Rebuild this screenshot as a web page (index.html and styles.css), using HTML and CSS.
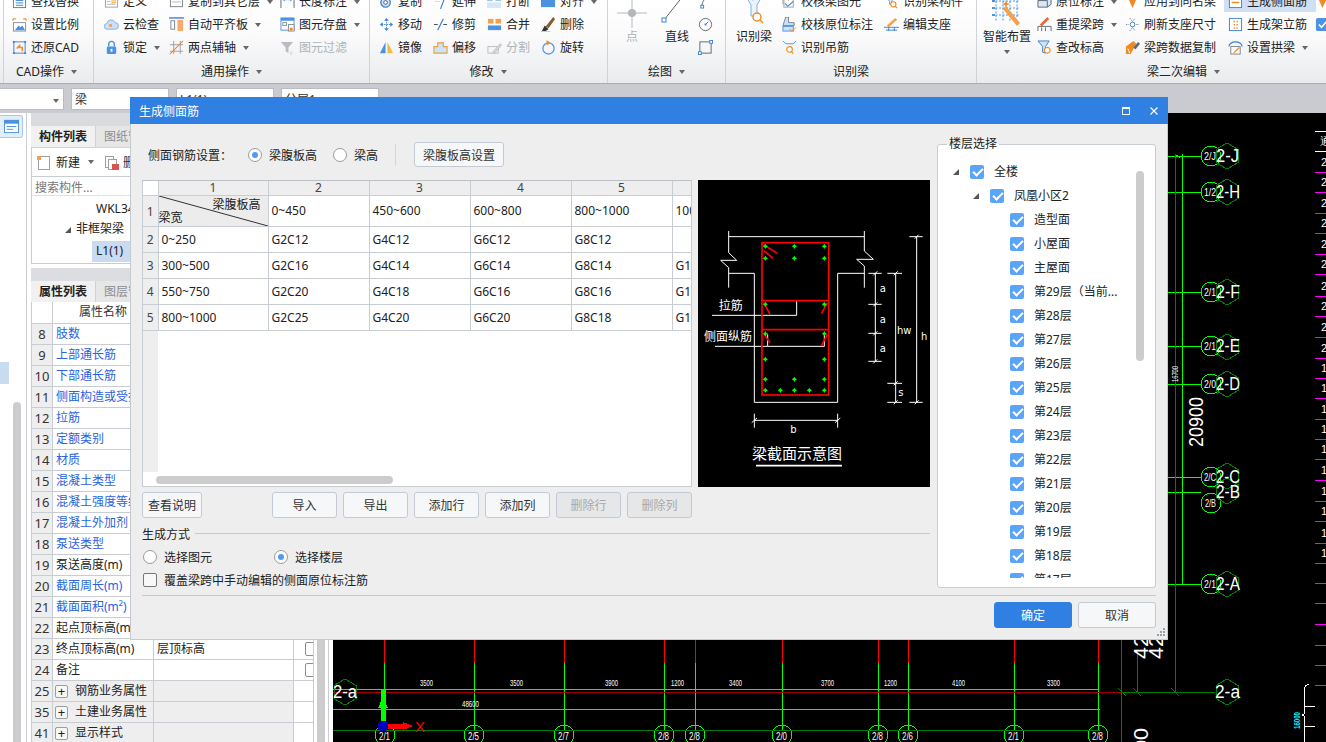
FILE: index.html
```html
<!DOCTYPE html>
<html lang="zh">
<head>
<meta charset="utf-8">
<title>生成侧面筋</title>
<link rel="stylesheet" href="styles.css">
</head>
<body>
<svg class="defs" aria-hidden="true">
  <symbol id="i-find" viewBox="0 0 16 16"><rect x="1.5" y="1.5" width="13" height="13" fill="#fff" stroke="#3b82d6"/><rect x="1" y="1" width="14" height="3" fill="#3b82d6"/><path d="M4 7h8M4 9.5h8M4 12h8" stroke="#3b82d6"/></symbol>
  <symbol id="i-scale" viewBox="0 0 16 16"><path d="M1 2h3M1 2v2M15 2h-3M15 2v2" stroke="#f08a24" stroke-width="1.2" fill="none"/><rect x="1.5" y="6" width="13" height="9" fill="#fff" stroke="#8a8f96"/><path d="M3 14l4-5 2 2 2-2 3 5z" fill="#4b93e0"/></symbol>
  <symbol id="i-restore" viewBox="0 0 16 16"><rect x="2" y="2" width="12" height="12" fill="none" stroke="#3b82d6"/><path d="M1 1h2v2H1zM13 1h2v2h-2zM1 13h2v2H1zM13 13h2v2h-2z" fill="#3b82d6"/><path d="M5 9l3-3v2h3v4" fill="none" stroke="#f08a24" stroke-width="1.6"/></symbol>
  <symbol id="i-def" viewBox="0 0 16 16"><rect x="1.5" y="3" width="13" height="11" fill="#fff" stroke="#9aa0a8"/><rect x="8" y="5" width="5" height="2" fill="#f5a04a"/><rect x="8" y="8" width="5" height="2" fill="#f5c04a"/><path d="M3 5h4M3 8h4M3 11h9" stroke="#b5b9c0"/></symbol>
  <symbol id="i-cloud" viewBox="0 0 16 16"><path d="M3.5 13a3 3 0 0 1-.4-6 4.5 4.5 0 0 1 8.700-1 3.500 3.500 0 0 1 .2 7z" fill="#cfe0f5" stroke="#7fb0e6"/><circle cx="7" cy="9" r="1.700" fill="#f5a04a"/></symbol>
  <symbol id="i-lock" viewBox="0 0 16 16"><path d="M5 7V4.500a3 3 0 0 1 6 0V7" fill="none" stroke="#4b93e0" stroke-width="1.500"/><rect x="3" y="7" width="10" height="8" rx="1.500" fill="#4b93e0"/><rect x="7" y="9.500" width="2" height="3" fill="#fff"/></symbol>
  <symbol id="i-copyto" viewBox="0 0 16 16"><rect x="1.500" y="2.500" width="13" height="11" fill="#fff" stroke="#7d838b"/><rect x="1" y="2" width="14" height="3" fill="#a4a9b0"/><rect x="3" y="8" width="10" height="1" fill="#b5b9c0"/></symbol>
  <symbol id="i-align" viewBox="0 0 16 16"><path d="M0 1h16" stroke="#3b82d6" stroke-width="1.500"/><rect x="2" y="4" width="4" height="9" fill="#fff" stroke="#7d838b"/><rect x="9" y="3" width="6" height="12" fill="#f7ac6b"/></symbol>
  <symbol id="i-two" viewBox="0 0 16 16"><path d="M5 1v14M12 1v14M1 5h14M1 12h14" stroke="#9aa0a8" fill="none"/><path d="M1 15L15 1" stroke="#f08a24" stroke-width="1.200"/></symbol>
  <symbol id="i-len" viewBox="0 0 16 16"><path d="M1 2v13M15 2v13M3 6h10" stroke="#5d6670" fill="none"/><path d="M3 6l2-2v4zM13 6l-2-2v4z" fill="#3b82d6"/></symbol>
  <symbol id="i-save" viewBox="0 0 16 16"><rect x="1" y="1" width="14" height="13" fill="#fff" stroke="#4b93e0"/><rect x="1" y="1" width="14" height="3" fill="#4b93e0"/><rect x="3" y="6" width="4" height="3" fill="none" stroke="#8a8f96"/><rect x="9" y="8" width="6" height="7" fill="#fff" stroke="#8a8f96"/><rect x="10.500" y="11.500" width="3" height="3" fill="#f08a24"/></symbol>
  <symbol id="i-filter" viewBox="0 0 16 16"><path d="M1 2h13L9 8v6L6 12V8z" fill="#b9bcc0"/><path d="M11 13h2M11 15h2" stroke="#c4c7ca"/></symbol>
  <symbol id="i-copy" viewBox="0 0 16 16"><circle cx="7" cy="9" r="5" fill="#cfe0f5" stroke="#3b82d6" stroke-width="1.400"/><circle cx="7" cy="9" r="2" fill="#fff" stroke="#557"/></symbol>
  <symbol id="i-move" viewBox="0 0 16 16"><path d="M8 1l2.500 3h-5zM8 15l2.500-3h-5zM1 8l3-2.500v5zM15 8l-3-2.500v5z" fill="#3b82d6"/><path d="M8 3v10M3 8h10" stroke="#3b82d6" stroke-dasharray="1.500 1"/></symbol>
  <symbol id="i-mirror" viewBox="0 0 16 16"><path d="M7 2L1 14h6z" fill="#4b93e0"/><path d="M9 2l6 12H9z" fill="#f5b942"/></symbol>
  <symbol id="i-extend" viewBox="0 0 16 16"><path d="M2 8h6" stroke="#c7cbd0" stroke-dasharray="2 1"/><path d="M14 0L8 16" stroke="#3b82d6" stroke-width="1.200"/></symbol>
  <symbol id="i-trim" viewBox="0 0 16 16"><path d="M1 8h4M11 8h4" stroke="#444"/><path d="M11 2L5 14" stroke="#3b82d6" stroke-width="1.200"/></symbol>
  <symbol id="i-offset" viewBox="0 0 16 16"><path d="M5 3h6v4h4v7H1V7h4z" fill="#cfe3f7" stroke="#f0a03c" stroke-width="1.200"/></symbol>
  <symbol id="i-break" viewBox="0 0 16 16"><rect x="0" y="0" width="6" height="7" fill="#4b93e0"/><rect x="9" y="0" width="6" height="7" fill="#4b93e0"/><rect x="0" y="9" width="15" height="6" fill="#d8e7f7"/></symbol>
  <symbol id="i-merge" viewBox="0 0 16 16"><rect x="1" y="2" width="6" height="5" fill="#f5a04a"/><rect x="9" y="2" width="6" height="5" fill="#f5a04a"/><rect x="1" y="9" width="14" height="5" fill="#4b93e0"/></symbol>
  <symbol id="i-split" viewBox="0 0 16 16"><rect x="1" y="7" width="11" height="7" fill="none" stroke="#b9bcc0"/><path d="M6 13l8-9 1.500 1.500-8 9z" fill="#d9dbde" stroke="#b9bcc0"/></symbol>
  <symbol id="i-alignr" viewBox="0 0 16 16"><rect x="0" y="1" width="15" height="13" fill="#4b93e0"/><rect x="0" y="0" width="15" height="2" fill="#8dbcec"/></symbol>
  <symbol id="i-del" viewBox="0 0 16 16"><path d="M5 10L13 0l2 2-7 10z" fill="#8a5a2b"/><path d="M4 9l4 4-3 2H1z" fill="#333"/><path d="M0 16h10" stroke="#c77" stroke-width="1"/></symbol>
  <symbol id="i-rot" viewBox="0 0 16 16"><circle cx="8" cy="9" r="6" fill="none" stroke="#4b93e0" stroke-width="1.300"/><path d="M6 0l4 3-4 3z" fill="#f08a24"/></symbol>
  <symbol id="i-arc" viewBox="0 0 16 16"><path d="M4 14C4 8 8 3 13 1" fill="none" stroke="#5d6670"/><rect x="3" y="12" width="3" height="3" fill="#fff" stroke="#3b82d6"/></symbol>
  <symbol id="i-circ" viewBox="0 0 16 16"><circle cx="8" cy="8" r="6.500" fill="#fff" stroke="#5d6670"/><path d="M8 8l3-3" stroke="#5d6670"/><rect x="7" y="7" width="2" height="2" fill="#3b82d6"/></symbol>
  <symbol id="i-rect" viewBox="0 0 16 16"><rect x="2" y="2" width="12" height="12" fill="none" stroke="#5d6670"/><rect x="0.500" y="12.500" width="3" height="3" fill="#fff" stroke="#3b82d6"/><rect x="12.500" y="0.500" width="3" height="3" fill="#fff" stroke="#3b82d6"/></symbol>
  <symbol id="i-check" viewBox="0 0 16 16"><path d="M1 1v10M3 1v10" stroke="#9aa0a8"/><rect x="2" y="1" width="10" height="13" fill="#fff" stroke="#9aa0a8"/><path d="M3 10l3 3 6-5" fill="none" stroke="#4b93e0" stroke-width="1.300"/><path d="M5 1l2 6 2-6" fill="none" stroke="#f08a24"/></symbol>
  <symbol id="i-check2" viewBox="0 0 16 16"><path d="M4 0h3v6h6v3H1z" fill="#cfe0f5" stroke="#5d6670" stroke-width=".8"/><rect x="1" y="10" width="11" height="5" fill="#cfe3f7" stroke="#4b93e0"/><path d="M8 13l3 2 4-4" fill="none" stroke="#f08a24"/></symbol>
  <symbol id="i-rec" viewBox="0 0 16 16"><path d="M2 2h10L8 8v4L6 11V8z" fill="#eaf2fb" stroke="#3b82d6" stroke-width=".8"/><circle cx="10" cy="11" r="2.800" fill="#fff" stroke="#f08a24" stroke-width="1.100"/><path d="M12 13l2 2" stroke="#f08a24" stroke-width="1.200"/></symbol>
  <symbol id="i-hang" viewBox="0 0 16 16"><path d="M1 1l3 3h8l3-3" fill="none" stroke="#4b93e0"/><circle cx="8" cy="10" r="3" fill="#fff" stroke="#f08a24" stroke-width="1.200"/><path d="M10 12l2 3" stroke="#f08a24" stroke-width="1.200"/></symbol>
  <symbol id="i-seat" viewBox="0 0 16 16"><path d="M3 9l9-8 2 2-9 8z" fill="#f5a04a"/><path d="M0 11h16M2 14h12M5 11v4M11 11v4" stroke="#3b82d6"/></symbol>
  <symbol id="i-orig" viewBox="0 0 16 16"><path d="M1 7l5-3h9v7l-4 3H1z" fill="#d8e7f7" stroke="#5d6670"/><path d="M1 7h10v7" fill="none" stroke="#5d6670"/></symbol>
  <symbol id="i-redo" viewBox="0 0 16 16"><path d="M3 8L11 0l2 2-8 8z" fill="#ea6a3a"/><path d="M1 10h14v5M1 10v5M5 11v4M9 11v4" fill="none" stroke="#5d6670"/></symbol>
  <symbol id="i-elev" viewBox="0 0 16 16"><path d="M1 1h12L9 7v7l-3-1V7z" fill="#cfe3f7" stroke="#3b82d6"/><circle cx="11" cy="11" r="3" fill="#fff" stroke="#f08a24" stroke-width="1.100"/></symbol>
  <symbol id="i-same" viewBox="0 0 16 16"><path d="M2 1h12v3H2z" fill="#f7d9a8"/><path d="M4 6h8l-4 9z" fill="#f08a24"/><path d="M1 1v5M15 1v5" stroke="#5d6670"/></symbol>
  <symbol id="i-size" viewBox="0 0 16 16"><circle cx="8" cy="8" r="2.500" fill="none" stroke="#3b82d6"/><path d="M5 1l3 4 3-4M5 15l3-4 3 4M1 8h3M12 8h3" fill="none" stroke="#7d838b" stroke-dasharray="1.500 1"/></symbol>
  <symbol id="i-data" viewBox="0 0 16 16"><path d="M1 15V7l8-6 3 3-6 11z" fill="#f08a24"/><path d="M9 8l5-6 2 2-5 6z" fill="#5d6670"/><path d="M3 9l2 5" stroke="#fff"/></symbol>
  <symbol id="i-side" viewBox="0 0 16 16"><rect x="1.500" y="1.500" width="13" height="13" fill="#fff" stroke="#3b82d6"/><path d="M4 9h8" stroke="#f08a24" stroke-width="1.500"/><path d="M4 5v1M12 5v1" stroke="#f08a24" stroke-width="1.500"/></symbol>
  <symbol id="i-erect" viewBox="0 0 16 16"><rect x="1.500" y="1.500" width="13" height="13" fill="#fff" stroke="#3b82d6"/><path d="M6 4h1.500v1.500H6zM9 4h1.500v1.500H9zM6 7.500h1.500V9H6zM9 7.500h1.500V9H9zM6 11h1.500v1.500H6zM9 11h1.500v1.500H9z" fill="#f08a24"/></symbol>
  <symbol id="i-arch" viewBox="0 0 16 16"><path d="M1 7a7 5 0 0 1 14 0" fill="none" stroke="#3b82d6" stroke-width="1.300"/><rect x="3" y="7" width="10" height="8" fill="#fff" stroke="#7d838b"/><path d="M6 14l6-6" stroke="#f08a24" stroke-width="1.300"/></symbol>
  <symbol id="i-tick" viewBox="0 0 16 16"><rect x="1" y="1" width="14" height="14" rx="2" fill="#4b93e0"/><path d="M4 8l3 3 5-6" fill="none" stroke="#fff" stroke-width="1.600"/></symbol>
  <symbol id="hex" viewBox="-12 -14 24 28" overflow="visible"><polygon points="0,-13 11,-6.500 11,6.500 0,13 -11,6.500 -11,-6.500" fill="none" stroke="#007f00"/></symbol>
</svg>

<div class="app">
  <header class="ribbon">
    <section class="group g-cad">
      <div class="gbody">
        <div class="col">
          <div class="it"><svg class="ic"><use href="#i-find"/></svg><span>查找替换</span></div>
          <div class="it"><svg class="ic"><use href="#i-scale"/></svg><span>设置比例</span></div>
          <div class="it"><svg class="ic"><use href="#i-restore"/></svg><span>还原CAD</span></div>
        </div>
      </div>
      <div class="glabel gl-cad">CAD操作<i class="caret"></i></div>
    </section>
    <section class="group g-gen">
      <div class="gbody">
        <div class="col c65">
          <div class="it"><svg class="ic"><use href="#i-def"/></svg><span>定义</span></div>
          <div class="it"><svg class="ic"><use href="#i-cloud"/></svg><span>云检查</span></div>
          <div class="it"><svg class="ic"><use href="#i-lock"/></svg><span>锁定</span><i class="caret"></i></div>
        </div>
        <div class="col c111">
          <div class="it"><svg class="ic"><use href="#i-copyto"/></svg><span>复制到其它层</span><i class="caret"></i></div>
          <div class="it"><svg class="ic"><use href="#i-align"/></svg><span>自动平齐板</span><i class="caret"></i></div>
          <div class="it"><svg class="ic"><use href="#i-two"/></svg><span>两点辅轴</span><i class="caret"></i></div>
        </div>
        <div class="col">
          <div class="it"><svg class="ic"><use href="#i-len"/></svg><span>长度标注</span><i class="caret"></i></div>
          <div class="it"><svg class="ic"><use href="#i-save"/></svg><span>图元存盘</span><i class="caret"></i></div>
          <div class="it off"><svg class="ic"><use href="#i-filter"/></svg><span>图元过滤</span></div>
        </div>
      </div>
      <div class="glabel">通用操作<i class="caret"></i></div>
    </section>
    <section class="group g-mod">
      <div class="gbody">
        <div class="col c54">
          <div class="it"><svg class="ic"><use href="#i-copy"/></svg><span>复制</span></div>
          <div class="it"><svg class="ic"><use href="#i-move"/></svg><span>移动</span></div>
          <div class="it"><svg class="ic"><use href="#i-mirror"/></svg><span>镜像</span></div>
        </div>
        <div class="col c54">
          <div class="it"><svg class="ic"><use href="#i-extend"/></svg><span>延伸</span></div>
          <div class="it"><svg class="ic"><use href="#i-trim"/></svg><span>修剪</span></div>
          <div class="it"><svg class="ic"><use href="#i-offset"/></svg><span>偏移</span></div>
        </div>
        <div class="col c54">
          <div class="it"><svg class="ic"><use href="#i-break"/></svg><span>打断</span></div>
          <div class="it"><svg class="ic"><use href="#i-merge"/></svg><span>合并</span></div>
          <div class="it off"><svg class="ic"><use href="#i-split"/></svg><span>分割</span></div>
        </div>
        <div class="col">
          <div class="it"><svg class="ic"><use href="#i-alignr"/></svg><span>对齐</span><i class="caret"></i></div>
          <div class="it"><svg class="ic"><use href="#i-del"/></svg><span>删除</span></div>
          <div class="it"><svg class="ic"><use href="#i-rot"/></svg><span>旋转</span></div>
        </div>
      </div>
      <div class="glabel">修改<i class="caret"></i></div>
    </section>
    <section class="group g-draw">
      <div class="gbody">
        <div class="lg w48 off">
          <svg class="lgic" viewBox="0 0 40 38"><path d="M5 22h30M20 5v32" stroke="#b4b8bd"/><circle cx="20" cy="22" r="4" fill="#b4b8bd"/></svg>
          <span>点</span>
        </div>
        <div class="lg w40">
          <svg class="lgic" viewBox="0 0 40 38"><path d="M7 29L30 0" stroke="#5d6670"/><rect x="5" y="27" width="4" height="4" fill="#fff" stroke="#3b82d6"/></svg>
          <span>直线</span>
        </div>
        <div class="col">
          <div class="it"><svg class="ic"><use href="#i-arc"/></svg></div>
          <div class="it"><svg class="ic"><use href="#i-circ"/></svg></div>
          <div class="it"><svg class="ic"><use href="#i-rect"/></svg></div>
        </div>
      </div>
      <div class="glabel">绘图<i class="caret"></i></div>
    </section>
    <section class="group g-rec">
      <div class="gbody">
        <div class="lg w54">
          <svg class="lgic" viewBox="0 0 40 38"><path d="M9 0l8 14v11h6V14l8-14" fill="#eaf2fb" stroke="#7fb0e6"/><path d="M13 2l6 8M18 0l5 8M24 0l2 4" stroke="#b5cfee"/><circle cx="23" cy="26" r="4" fill="#fff" stroke="#f08a24" stroke-width="1.400"/><path d="M26 29l3 3" stroke="#f08a24" stroke-width="1.400"/></svg>
          <span>识别梁</span>
        </div>
        <div class="col c102">
          <div class="it"><svg class="ic"><use href="#i-check"/></svg><span>校核梁图元</span></div>
          <div class="it"><svg class="ic"><use href="#i-check2"/></svg><span>校核原位标注</span></div>
          <div class="it"><svg class="ic"><use href="#i-hang"/></svg><span>识别吊筋</span></div>
        </div>
        <div class="col">
          <div class="it"><svg class="ic"><use href="#i-rec"/></svg><span>识别梁构件</span></div>
          <div class="it"><svg class="ic"><use href="#i-seat"/></svg><span>编辑支座</span></div>
        </div>
      </div>
      <div class="glabel">识别梁</div>
    </section>
    <section class="group g-beam">
      <div class="gbody">
        <div class="lg w58">
          <svg class="lgic" viewBox="0 0 40 38"><path d="M9 3v28M16 3v28M23 3v28M30 3v24M5 10h28M5 17h28M5 24h28" stroke="#4b93e0" stroke-dasharray="2 1.500"/><path d="M5 10h3M5 17h3M5 24h3" stroke="#4b93e0" stroke-width="2"/><path d="M19 15l14 17-3 3-14-17z" fill="#f5a04a"/><path d="M19 9l1 3 3 1-3 1-1 3-1-3-3-1 3-1z" fill="#f08a24"/></svg>
          <span>智能布置</span>
          <i class="caret lgcaret"></i>
        </div>
        <div class="col c88">
          <div class="it"><svg class="ic"><use href="#i-orig"/></svg><span>原位标注</span><i class="caret"></i></div>
          <div class="it"><svg class="ic"><use href="#i-redo"/></svg><span>重提梁跨</span><i class="caret"></i></div>
          <div class="it"><svg class="ic"><use href="#i-elev"/></svg><span>查改标高</span></div>
        </div>
        <div class="col c103">
          <div class="it"><svg class="ic"><use href="#i-same"/></svg><span>应用到同名梁</span></div>
          <div class="it"><svg class="ic"><use href="#i-size"/></svg><span>刷新支座尺寸</span></div>
          <div class="it"><svg class="ic"><use href="#i-data"/></svg><span>梁跨数据复制</span></div>
        </div>
        <div class="col c87">
          <div class="it sel"><svg class="ic"><use href="#i-side"/></svg><span>生成侧面筋</span></div>
          <div class="it"><svg class="ic"><use href="#i-erect"/></svg><span>生成架立筋</span></div>
          <div class="it"><svg class="ic"><use href="#i-arch"/></svg><span>设置拱梁</span><i class="caret"></i></div>
        </div>
        <div class="col">
          <div class="it"><svg class="ic"><use href="#i-same"/></svg></div>
          <div class="it"><svg class="ic"><use href="#i-tick"/></svg></div>
        </div>
      </div>
      <div class="glabel gl-beam">梁二次编辑<i class="caret"></i></div>
    </section>
  </header>

  <div class="selbar">
    <div class="selbox s1"><i class="caret"></i></div>
    <div class="selbox">梁</div>
    <div class="selbox">L1(1)</div>
    <div class="selbox">分层1</div>
  </div>

  <main class="work">
    <nav class="rail">
      <div class="railtab"><svg class="railic" viewBox="0 0 16 16"><rect x=".5" y="1.500" width="15" height="13" fill="#fff" stroke="#4b93e0"/><rect x="0" y="1" width="16" height="4" fill="#4b93e0"/><path d="M3 8h10M3 11h7" stroke="#4b93e0"/></svg></div>
      <div class="railsel"></div>
      <div class="railbar"></div>
    </nav>
    <div class="panel">
      <div class="ptop"></div>
      <div class="tabs">
        <div class="tab on">构件列表</div>
        <div class="tab">图纸管理</div>
      </div>
      <div class="ptool">
        <svg class="ic"><rect x="2.500" y="1.500" width="11" height="13" fill="#fff" stroke="#9aa0a8"/><path d="M1 1h4v4H1z" fill="#f5a04a"/></svg>
        <span class="ptxt">新建</span><i class="caret"></i>
        <svg class="ic pdel"><rect x="1.500" y="1.500" width="8" height="11" fill="#fff" stroke="#9aa0a8"/><rect x="4.500" y="4.500" width="8" height="10" fill="#fff" stroke="#9aa0a8"/><rect x="8" y="9" width="7" height="7" fill="#d9534f"/></svg>
        <span>删除</span>
      </div>
      <div class="psearch">搜索构件...</div>
      <div class="ptree">
        <div class="tr t1">WKL34</div>
        <div class="tr t2"><i class="arrow"></i>非框架梁</div>
        <div class="tr t3"><span class="picked">L1(1)</span></div>
      </div>
      <div class="pgap"></div>
      <div class="tabs">
        <div class="tab on">属性列表</div>
        <div class="tab">图层管理</div>
      </div>
      <div class="props">
        <div class="prow phead"><div></div><div class="pc">属性名称</div><div class="pv pc">属性值</div><div></div></div>
        <div class="prow"><div class="pn">8</div><div class="pname link">肢数</div><div class="pv"></div><div></div></div>
        <div class="prow"><div class="pn">9</div><div class="pname link">上部通长筋</div><div class="pv"></div><div></div></div>
        <div class="prow"><div class="pn">10</div><div class="pname link">下部通长筋</div><div class="pv"></div><div></div></div>
        <div class="prow"><div class="pn">11</div><div class="pname link">侧面构造或受扭筋</div><div class="pv"></div><div></div></div>
        <div class="prow"><div class="pn">12</div><div class="pname link">拉筋</div><div class="pv"></div><div></div></div>
        <div class="prow"><div class="pn">13</div><div class="pname link">定额类别</div><div class="pv"></div><div></div></div>
        <div class="prow"><div class="pn">14</div><div class="pname link">材质</div><div class="pv"></div><div></div></div>
        <div class="prow"><div class="pn">15</div><div class="pname link">混凝土类型</div><div class="pv"></div><div></div></div>
        <div class="prow"><div class="pn">16</div><div class="pname link">混凝土强度等级</div><div class="pv"></div><div></div></div>
        <div class="prow"><div class="pn">17</div><div class="pname link">混凝土外加剂</div><div class="pv"></div><div></div></div>
        <div class="prow"><div class="pn">18</div><div class="pname link">泵送类型</div><div class="pv"></div><div></div></div>
        <div class="prow"><div class="pn">19</div><div class="pname">泵送高度(m)</div><div class="pv"></div><div></div></div>
        <div class="prow"><div class="pn">20</div><div class="pname link">截面周长(m)</div><div class="pv"></div><div></div></div>
        <div class="prow"><div class="pn">21</div><div class="pname link">截面面积(m²)</div><div class="pv"></div><div></div></div>
        <div class="prow"><div class="pn">22</div><div class="pname">起点顶标高(m)</div><div class="pv"></div><div></div></div>
        <div class="prow"><div class="pn">23</div><div class="pname">终点顶标高(m)</div><div class="pv">层顶标高</div><div class="pk"><span class="minick"></span></div></div>
        <div class="prow"><div class="pn">24</div><div class="pname">备注</div><div class="pv"></div><div class="pk"><span class="minick"></span></div></div>
        <div class="prow pgroup"><div class="pn">25</div><div class="pname"><span class="plus">+</span>钢筋业务属性</div><div class="pv"></div><div></div></div>
        <div class="prow pgroup"><div class="pn">35</div><div class="pname"><span class="plus">+</span>土建业务属性</div><div class="pv"></div><div></div></div>
        <div class="prow pgroup"><div class="pn">41</div><div class="pname"><span class="plus">+</span>显示样式</div><div class="pv"></div><div></div></div>
      </div>
    </div>
    <div class="pscroll"><div class="pthumb"></div></div>

    <div class="canvas">
      <svg class="cad" viewBox="333 113 993 629" width="993" height="629">
        <g class="bright">
          <path d="M1168 156h33M1168 192h33M1168 292h33M1168 346h33M1168 384h33M1168 477h33M1168 492h33M1168 584h33"/>
          <path d="M1182 154v430M1175 154l5 4"/>
          <path d="M333 689H1098M333 709H1100"/>
          <path d="M384 663v67M474 663v67M564 663v67M664 663v67M695 663v67M782 663v67M878 663v67M908 663v67M1014 663v67M1098 663v67"/>
          <circle cx="1211" cy="156" r="10"/><circle cx="1211" cy="192" r="10"/><circle cx="1211" cy="292" r="10"/><circle cx="1211" cy="346" r="10"/><circle cx="1211" cy="384" r="10"/><circle cx="1211" cy="477" r="10"/><circle cx="1211" cy="503" r="10"/><circle cx="1211" cy="584" r="10"/>
          <circle cx="385" cy="735" r="10"/><circle cx="474" cy="735" r="10"/><circle cx="564" cy="735" r="10"/><circle cx="664" cy="735" r="10"/><circle cx="695" cy="735" r="10"/><circle cx="782" cy="735" r="10"/><circle cx="878" cy="735" r="10"/><circle cx="908" cy="735" r="10"/><circle cx="1014" cy="735" r="10"/><circle cx="1098" cy="735" r="10"/>
        </g>
        <g class="dark">
          <path d="M1175 154V692M1121 640V742M1137 650V692M1120 692H1215M333 730H1100"/>
          <path d="M1118 688l8 8M1133 688l8 8M1171 688l8 8"/>
          <use href="#hex" x="1215" y="142" width="24" height="28"/><use href="#hex" x="1215" y="178" width="24" height="28"/><use href="#hex" x="1215" y="278" width="24" height="28"/><use href="#hex" x="1215" y="333" width="24" height="28"/><use href="#hex" x="1215" y="370" width="24" height="28"/><use href="#hex" x="1215" y="462" width="24" height="28"/><use href="#hex" x="1215" y="477" width="24" height="28"/><use href="#hex" x="1215" y="570" width="24" height="28"/><use href="#hex" x="1215" y="678" width="24" height="28"/><use href="#hex" x="333" y="678" width="24" height="28"/>
        </g>
        <g class="redline">
          <path d="M384 640v23M474 640v23M564 640v23M664 640v23M695 640v23M782 640v23M878 640v23M908 640v23M1014 640v23M1098 640v23"/>
        </g>
        <path class="dred" d="M333 692H1121"/>
        <g class="magenta">
          <path d="M1315 172h11M1315 192h11M1315 213h11M1315 233h11M1315 254h11M1315 274h11M1315 296h11M1315 316h11M1315 337h11M1315 358h11M1315 378h11M1315 398h11M1315 419h11M1315 439h11M1315 459h11M1315 480h11M1315 501h11M1315 521h11M1315 543h11M1315 563h11M1315 583h11M1315 603h11M1315 624h11M1315 645h11M1315 665h11M1315 685h11"/>
        </g>
        <path class="wline" d="M1315 131h11M1315 151h11M1309 684c-3 1-5 3-5 6v24l-2 1 2 1v26M1304 706h11M1304 726h11"/>
        <g class="ctext">
          <text x="1204" y="160" class="t11" textLength="12" lengthAdjust="spacingAndGlyphs">2/J</text>
          <text x="1216" y="162" class="t18" textLength="23" lengthAdjust="spacingAndGlyphs">2-J</text>
          <text x="1204" y="196" class="t11" textLength="12" lengthAdjust="spacingAndGlyphs">1/2</text>
          <text x="1216" y="198" class="t18" textLength="24" lengthAdjust="spacingAndGlyphs">2-H</text>
          <text x="1204" y="296" class="t11" textLength="12" lengthAdjust="spacingAndGlyphs">2/1</text>
          <text x="1216" y="298" class="t18" textLength="24" lengthAdjust="spacingAndGlyphs">2-F</text>
          <text x="1204" y="350" class="t11" textLength="12" lengthAdjust="spacingAndGlyphs">2/1</text>
          <text x="1216" y="352" class="t18" textLength="24" lengthAdjust="spacingAndGlyphs">2-E</text>
          <text x="1204" y="388" class="t11" textLength="12" lengthAdjust="spacingAndGlyphs">2/0</text>
          <text x="1216" y="390" class="t18" textLength="24" lengthAdjust="spacingAndGlyphs">2-D</text>
          <text x="1204" y="481" class="t11" textLength="12" lengthAdjust="spacingAndGlyphs">2/C</text>
          <text x="1216" y="483" class="t18" textLength="24" lengthAdjust="spacingAndGlyphs">2-C</text>
          <text x="1216" y="498" class="t18" textLength="24" lengthAdjust="spacingAndGlyphs">2-B</text>
          <text x="1205" y="507" class="t11" textLength="11" lengthAdjust="spacingAndGlyphs">2/B</text>
          <text x="1204" y="588" class="t11" textLength="12" lengthAdjust="spacingAndGlyphs">2/1</text>
          <text x="1216" y="590" class="t18" textLength="24" lengthAdjust="spacingAndGlyphs">2-A</text>
          <text x="1215" y="698" class="t18" textLength="25" lengthAdjust="spacingAndGlyphs">2-a</text>
          <text x="333" y="698" class="t18" textLength="24" lengthAdjust="spacingAndGlyphs">2-a</text>
          <text x="420" y="686" class="t9" textLength="13" lengthAdjust="spacingAndGlyphs">3500</text>
          <text x="510" y="686" class="t9" textLength="13" lengthAdjust="spacingAndGlyphs">3500</text>
          <text x="605" y="686" class="t9" textLength="13" lengthAdjust="spacingAndGlyphs">3900</text>
          <text x="671" y="686" class="t9" textLength="13" lengthAdjust="spacingAndGlyphs">1200</text>
          <text x="729" y="686" class="t9" textLength="13" lengthAdjust="spacingAndGlyphs">3400</text>
          <text x="821" y="686" class="t9" textLength="13" lengthAdjust="spacingAndGlyphs">3700</text>
          <text x="884" y="686" class="t9" textLength="13" lengthAdjust="spacingAndGlyphs">1200</text>
          <text x="952" y="686" class="t9" textLength="13" lengthAdjust="spacingAndGlyphs">4100</text>
          <text x="1047" y="686" class="t9" textLength="13" lengthAdjust="spacingAndGlyphs">3300</text>
          <text x="462" y="707" class="t9" textLength="17" lengthAdjust="spacingAndGlyphs">48600</text>
          <text x="379" y="740" class="t11" textLength="11" lengthAdjust="spacingAndGlyphs">2/1</text>
          <text x="468" y="740" class="t11" textLength="11" lengthAdjust="spacingAndGlyphs">2/5</text>
          <text x="558" y="740" class="t11" textLength="11" lengthAdjust="spacingAndGlyphs">2/7</text>
          <text x="658" y="740" class="t11" textLength="11" lengthAdjust="spacingAndGlyphs">2/8</text>
          <text x="689" y="740" class="t11" textLength="11" lengthAdjust="spacingAndGlyphs">2/8</text>
          <text x="776" y="740" class="t11" textLength="11" lengthAdjust="spacingAndGlyphs">2/0</text>
          <text x="872" y="740" class="t11" textLength="11" lengthAdjust="spacingAndGlyphs">2/8</text>
          <text x="902" y="740" class="t11" textLength="11" lengthAdjust="spacingAndGlyphs">2/6</text>
          <text x="1008" y="740" class="t11" textLength="11" lengthAdjust="spacingAndGlyphs">2/1</text>
          <text x="1092" y="740" class="t11" textLength="11" lengthAdjust="spacingAndGlyphs">2/8</text>
          <text class="t20" transform="translate(1203 447) rotate(-90)" textLength="50" lengthAdjust="spacingAndGlyphs">20900</text>
          <text class="t9" transform="translate(1178 382) rotate(-90)" textLength="16" lengthAdjust="spacingAndGlyphs">16700</text>
          <text class="t20" transform="translate(1148 659) rotate(-90)" textLength="24" lengthAdjust="spacingAndGlyphs">42</text>
          <text class="t20" transform="translate(1163 659) rotate(-90)" textLength="24" lengthAdjust="spacingAndGlyphs">42</text>
          <text class="t20" transform="translate(1148 752) rotate(-90)" textLength="24" lengthAdjust="spacingAndGlyphs">00</text>
          <text x="1320" y="145" class="t11">通</text>
          <text x="1321" y="166" class="t11">2</text><text x="1321" y="186" class="t11">2</text><text x="1321" y="207" class="t11">2</text><text x="1321" y="227" class="t11">2</text><text x="1321" y="248" class="t11">2</text><text x="1321" y="268" class="t11">2</text><text x="1321" y="290" class="t11">2</text><text x="1321" y="310" class="t11">2</text><text x="1321" y="331" class="t11">2</text><text x="1321" y="352" class="t11">2</text>
          <text x="1321" y="372" class="t11">1</text><text x="1321" y="392" class="t11">1</text><text x="1321" y="413" class="t11">1</text><text x="1321" y="433" class="t11">1</text><text x="1321" y="453" class="t11">1</text><text x="1321" y="474" class="t11">1</text><text x="1321" y="495" class="t11">1</text><text x="1321" y="515" class="t11">1</text><text x="1321" y="537" class="t11">1</text><text x="1321" y="557" class="t11">1</text>
        </g>
        <text class="cyan" transform="translate(1300 729) rotate(-90)" textLength="17" lengthAdjust="spacingAndGlyphs">16000</text>
        <path class="axisg" d="M383 721V690"/>
        <path class="axisgh" d="M383 697l5 11h-10z"/>
        <path class="axisr" d="M388 726h18"/>
        <path class="axisrh" d="M413 726l-10-4v8z"/>
        <circle class="axisb" cx="383" cy="726" r="5.500"/>
        <text class="axisx" x="415" y="732">X</text>
      </svg>
    </div>
  </main>

  <div class="dialog">
    <div class="dtitle">
      <span>生成侧面筋</span>
      <span class="dbtns">
        <svg class="dbtn" viewBox="0 0 10 10"><rect x="1.500" y="1.500" width="7" height="7" fill="none" stroke="#fff"/><path d="M1 2h8" stroke="#fff" stroke-width="2"/></svg>
        <svg class="dbtn" viewBox="0 0 10 10"><path d="M1.500 1.500l7 7M8.500 1.500l-7 7" stroke="#fff" stroke-width="1.200"/></svg>
      </span>
    </div>
    <div class="dbody">
      <div class="dmain">
        <div class="dleft">
          <div class="setrow">
            <span class="setlabel">侧面钢筋设置：</span>
            <label class="rad r1"><i class="radio on"></i>梁腹板高</label>
            <label class="rad r2"><i class="radio"></i>梁高</label>
            <i class="vsep"></i>
            <button class="btn bset">梁腹板高设置</button>
          </div>
          <div class="gridrow">
            <div class="gridwrap">
              <table class="grid">
                <colgroup><col class="c0"><col class="c1"><col class="cn"><col class="cn"><col class="cn"><col class="cn"><col class="cn"></colgroup>
                <tr class="hr"><th class="blank"></th><th>1</th><th>2</th><th>3</th><th>4</th><th>5</th><th></th></tr>
                <tr class="r0"><th>1</th>
                  <td class="corner">
                    <svg class="diag" viewBox="0 0 100 100" preserveAspectRatio="none"><path d="M0 0L100 100" stroke="#333" vector-effect="non-scaling-stroke"/></svg>
                    <span class="ctop">梁腹板高</span><span class="cbot">梁宽</span>
                  </td>
                  <td>0~450</td><td>450~600</td><td>600~800</td><td>800~1000</td><td>1000~1200</td></tr>
                <tr><th>2</th><td>0~250</td><td>G2C12</td><td>G4C12</td><td>G6C12</td><td>G8C12</td><td></td></tr>
                <tr><th>3</th><td>300~500</td><td>G2C16</td><td>G4C14</td><td>G6C14</td><td>G8C14</td><td>G10C14</td></tr>
                <tr><th>4</th><td>550~750</td><td>G2C20</td><td>G4C18</td><td>G6C16</td><td>G8C16</td><td>G10C16</td></tr>
                <tr><th>5</th><td>800~1000</td><td>G2C25</td><td>G4C20</td><td>G6C20</td><td>G8C18</td><td>G10C18</td></tr>
              </table>
              <div class="hthumb"></div>
            </div>
            <div class="section">
              <svg class="secsvg" viewBox="24 27 696 921" width="232" height="307">
                <g class="w">
                  <path d="M116 180V245L140 268H92L116 290V350M116 197H523M523 180V240L550 265H500L523 285V350"/>
                  <path d="M116 307H193V694H443V307H523"/>
                  <path d="M320 390V433H66M233 490V526H75M403 490V526H233"/>
                  <path d="M556 307V571M535 307H575M535 400H575M535 487H575M535 571H575"/>
                  <path d="M617 307V694M592 307H636M592 637H636M592 694H636"/>
                  <path d="M680 197V694M658 197H698M658 694H698"/>
                  <path d="M193 748H443M193 728V770M443 728V770"/>
                  <path d="M185 755l16-14M435 755l16-14M550 313l12-12M550 406l12-12M550 493l12-12M550 577l12-12M611 313l12-12M611 643l12-12M611 700l12-12M674 203l12-12M674 700l12-12"/>
                </g>
                <g class="red">
                  <rect x="216" y="215" width="200" height="457"/>
                  <path d="M216 389H416M216 476H416"/>
                  <path d="M222 222l40 25M222 240l28 22M222 396l18 34M412 396l-18 32M222 490l18 25M412 490l-18 35"/>
                </g>
                <g class="dots">
                  <use href="#dot" x="226" y="226"/><use href="#dot" x="313" y="226"/><use href="#dot" x="403" y="226"/><use href="#dot" x="226" y="262"/><use href="#dot" x="313" y="262"/><use href="#dot" x="403" y="262"/><use href="#dot" x="226" y="400"/><use href="#dot" x="403" y="400"/><use href="#dot" x="226" y="488"/><use href="#dot" x="403" y="488"/><use href="#dot" x="226" y="565"/><use href="#dot" x="403" y="565"/><use href="#dot" x="226" y="625"/><use href="#dot" x="313" y="625"/><use href="#dot" x="403" y="625"/><use href="#dot" x="226" y="658"/><use href="#dot" x="271" y="658"/><use href="#dot" x="313" y="658"/><use href="#dot" x="358" y="658"/><use href="#dot" x="403" y="658"/>
                </g>
                <defs><path id="dot" d="M0-8L3-3 8 0 3 3 0 8-3 3-8 0-3-3z" fill="#0f0"/></defs>
                <g class="lab">
                  <text x="86" y="416" class="cjk36">拉筋</text>
                  <text x="42" y="510" class="cjk36">侧面纵筋</text>
                  <text x="569" y="362">a</text><text x="569" y="455">a</text><text x="569" y="542">a</text>
                  <text x="621" y="490">hw</text>
                  <text x="625" y="675">s</text>
                  <text x="693" y="506">h</text>
                  <text x="301" y="787">b</text>
                  <text x="186" y="864" class="cjk45">梁截面示意图</text>
                </g>
                <path class="wu" d="M198 884H456"/>
              </svg>
            </div>
          </div>
          <div class="btnrow">
            <button class="btn b60">查看说明</button>
            <span class="bspace"></span>
            <button class="btn b65">导入</button>
            <button class="btn b65">导出</button>
            <button class="btn b65">添加行</button>
            <button class="btn b65">添加列</button>
            <button class="btn b65 dis">删除行</button>
            <button class="btn b65 dis">删除列</button>
          </div>
          <div class="legend"><span>生成方式</span><i></i></div>
          <div class="genrow">
            <label class="rad g1"><i class="radio"></i>选择图元</label>
            <label class="rad"><i class="radio on"></i>选择楼层</label>
          </div>
          <label class="rad cover"><i class="box"></i>覆盖梁跨中手动编辑的侧面原位标注筋</label>
        </div>
        <div class="floors">
          <div class="flegend">楼层选择</div>
          <div class="flist">
            <div class="fr l0"><i class="arrow"></i><i class="ck"></i><span>全楼</span></div>
            <div class="fr l1"><i class="arrow"></i><i class="ck"></i><span>凤凰小区2</span></div>
            <div class="fr l2"><i class="ck"></i><span>造型面</span></div>
            <div class="fr l2"><i class="ck"></i><span>小屋面</span></div>
            <div class="fr l2"><i class="ck"></i><span>主屋面</span></div>
            <div class="fr l2"><i class="ck"></i><span>第29层（当前...</span></div>
            <div class="fr l2"><i class="ck"></i><span>第28层</span></div>
            <div class="fr l2"><i class="ck"></i><span>第27层</span></div>
            <div class="fr l2"><i class="ck"></i><span>第26层</span></div>
            <div class="fr l2"><i class="ck"></i><span>第25层</span></div>
            <div class="fr l2"><i class="ck"></i><span>第24层</span></div>
            <div class="fr l2"><i class="ck"></i><span>第23层</span></div>
            <div class="fr l2"><i class="ck"></i><span>第22层</span></div>
            <div class="fr l2"><i class="ck"></i><span>第21层</span></div>
            <div class="fr l2"><i class="ck"></i><span>第20层</span></div>
            <div class="fr l2"><i class="ck"></i><span>第19层</span></div>
            <div class="fr l2"><i class="ck"></i><span>第18层</span></div>
            <div class="fr l2"><i class="ck"></i><span>第17层</span></div>
          </div>
          <div class="vthumb"></div>
        </div>
      </div>
      <div class="dhr"></div>
      <div class="dfoot">
        <button class="btn bok">确定</button>
        <button class="btn bcancel">取消</button>
      </div>
    </div>
    <svg class="grip" viewBox="0 0 8 8"><path d="M6 0h2v2H6zM3 3h2v2H3zM6 3h2v2H6zM0 6h2v2H0zM3 6h2v2H3zM6 6h2v2H6z" fill="#9aa0a8"/></svg>
  </div>
</div>
</body>
</html>
```

FILE: styles.css
```css
* { box-sizing: border-box; }
html, body { margin: 0; padding: 0; }
body {
  width: 1326px;
  height: 742px;
  overflow: hidden;
  font-family: "Noto Sans", "Noto Sans CJK SC", sans-serif;
  font-size: 12px;
  color: #333;
  background: #c9cbd0;
}
.defs { display: none; }
.app { position: relative; width: 1326px; height: 742px; overflow: hidden; display: flex; flex-direction: column; }

/* ribbon */
.ribbon {
  height: 84px;
  flex: none;
  display: flex;
  overflow: hidden;
  background: linear-gradient(#fff 0, #fbfbfc 40%, #e9ebed 100%);
  border-bottom: 1px solid #a9acb2;
}
.group { flex: none; height: 83px; display: flex; flex-direction: column; border-right: 1px solid #cfd2d6; }
.g-cad { width: 91px; margin-left: 3px; border-left: 1px solid #cfd2d6; padding-left: 8px; }
.g-gen { width: 276px; padding-left: 10px; }
.g-mod { width: 238px; padding-left: 9px; }
.g-draw { width: 118px; }
.g-rec { width: 251px; }
.g-beam { width: 349px; border-right: 0; }
.gbody { display: flex; height: 69px; margin-top: -9px; flex: none; }
.col { display: flex; flex-direction: column; flex: none; }
.c54 { width: 54px; }
.c65 { width: 65px; }
.c87 { width: 87px; }
.c88 { width: 88px; }
.c102 { width: 102px; }
.c103 { width: 103px; }
.c111 { width: 111px; }
.it { display: flex; align-items: center; height: 21px; margin-bottom: 2px; white-space: nowrap; line-height: 21px; color: #222; }
.it.off, .lg.off { color: #b0b3b7; }
.it.sel { background: #cfe0f5; margin-left: -4px; padding-left: 4px; margin-right: -1px; }
.ic { width: 15px; height: 15px; flex: none; margin-right: 4px; }
.caret { display: inline-block; width: 0; height: 0; border: 3.5px solid transparent; border-top: 4px solid #666; border-bottom: 0; margin-left: 7px; flex: none; }
.glabel { height: 23px; line-height: 23px; text-align: center; color: #222; flex: none; }
.g-gen .glabel, .g-mod .glabel { margin-right: 10px; }
.gl-cad { margin-right: 12px; }
.gl-beam { padding-left: 64px; }
.glabel .caret { vertical-align: middle; margin-bottom: 2px; }
.lg { display: flex; flex-direction: column; align-items: center; flex: none; line-height: 16px; color: #222; }
.lgic { width: 40px; height: 38px; flex: none; }
.lgcaret { margin: 5px 0 0; }
.w48 { width: 48px; }
.w40 { width: 42px; }
.w54 { width: 56px; }
.w58 { width: 60px; }

/* selector bar */
.selbar { height: 29px; flex: none; display: flex; gap: 7px; padding-top: 4px; background: #c9cbd0; }
.selbox { width: 98px; height: 22px; line-height: 22px; padding-left: 3px; background: #fff; border: 1px solid #b9bcc2; font-size: 12px; color: #333; }
.s1 { width: 64px; border-left: 0; text-align: right; padding-right: 4px; }
.s1 .caret { vertical-align: middle; margin-left: 0; }

/* work area */
.work { flex: 1; display: flex; min-height: 0; }
.rail { width: 31px; flex: none; background: linear-gradient(90deg, #fff 26px, #c9ccd2 26px, #c9ccd2 27px, #fff 27px); }
.railtab { width: 23px; height: 23px; margin-top: 2px; border: 1px solid #a9c9ec; border-left: 0; border-radius: 0 3px 3px 0; background: #e3eefb; display: flex; align-items: center; justify-content: center; }
.railic { width: 15px; height: 15px; }
.railsel { width: 9px; height: 22px; margin-top: 224px; background: #c9dbf0; }
.railbar { width: 8px; height: 340px; margin: 18px 0 0 13px; background: #ccc; border-radius: 4px 4px 0 0; }
.panel { width: 283px; flex: none; display: flex; flex-direction: column; overflow: hidden; background: #fff; }
.ptop { height: 13px; flex: none; background: #d9dbde; }
.tabs { height: 21px; flex: none; display: flex; background: #dfe0e2; }
.tab { width: 65px; line-height: 21px; text-align: center; color: #8b8e92; background: #e6e6e7; border-right: 1px solid #cfd1d4; }
.tab.on { color: #222; background: #f1f1f1; font-weight: 600; }
.ptool { height: 30px; flex: none; display: flex; align-items: center; padding-left: 4px; border-top: 1px solid #d0d3d8; border-bottom: 1px solid #c8ccd3; border-left: 1px solid #c8ccd3; }
.ptxt { color: #222; margin-left: 1px; }
.ptool .caret { margin-left: 8px; }
.pdel { margin-left: 10px; }
.psearch { height: 19px; line-height: 21px; flex: none; padding-left: 3px; color: #777; border-left: 1px solid #c8ccd3; border-bottom: 1px solid #e0e2e6; }
.ptree { height: 68px; flex: none; border-left: 1px solid #c8ccd3; border-bottom: 1px solid #c8ccd3; line-height: 22px; color: #222; }
.tr { height: 22px; white-space: nowrap; }
.t1 { padding-left: 64px; line-height: 26px; }
.t2 { padding-left: 33px; line-height: 22px; }
.t3 { padding-left: 60px; }
.t2 .arrow { margin-right: 5px; }
.picked { display: inline-block; width: 60px; height: 21px; line-height: 19px; padding-left: 4px; background: #c9dbf0; }
.arrow { display: inline-block; width: 0; height: 0; border-style: solid; border-width: 0 0 6px 6px; border-color: transparent transparent #555 transparent; }
.pgap { height: 17px; flex: none; background: linear-gradient(#fff 4px, #dcdde0 4px); }
.props { flex: 1; border-left: 1px solid #c8ccd3; }
.prow { display: grid; grid-template-columns: 21px 101px 140px 20px; height: 21px; line-height: 20px; border-bottom: 1px solid #c8ccd3; }
.prow > div { border-right: 1px solid #c8ccd3; min-width: 0; overflow: hidden; white-space: nowrap; }
.phead { height: 22px; color: #333; }
.pc { text-align: center; }
.pn { background: #eee; text-align: center; color: #333; font-size: 13px; }
.phead > div:first-child { background: #fff; }
.pname { padding-left: 3px; color: #222; }
.link { color: #2a62e0; }
.pv { padding-left: 3px; color: #222; }
.pgroup .pname, .pgroup .pv { background: #eee; }
.pgroup .pname { padding-left: 2px; display: flex; align-items: center; }
.plus { width: 13px; height: 13px; border: 1px solid #9a9da2; border-radius: 2px; background: #f7f7f7; line-height: 11px; text-align: center; margin-right: 7px; font-size: 13px; flex: none; }
.pk { padding: 3px 0 0 11px; }
.minick { display: block; width: 12px; height: 14px; border: 1px solid #8f8f8f; border-radius: 2px; }
.pscroll { width: 19px; flex: none; background: linear-gradient(90deg, #fff 14px, #c9ccd2 14px, #c9ccd2 15px, #fff 15px); }
.pthumb { width: 8px; height: 100%; margin-left: 3px; background: #ccc; }
.canvas { flex: 1; background: #000; overflow: hidden; min-width: 0; }
.cad { display: block; shape-rendering: crispEdges; }
.cad path, .cad circle { fill: none; }
.bright { stroke: #0f0; fill: none; }
.bright circle { stroke: #0f0; }
.dark { stroke: #007f00; }
.redline { stroke: #f00; }
.dred { stroke: #a00000; }
.magenta { stroke: #f0f; }
.wline { stroke: #fff; }
.ctext text { fill: #fff; font-family: "Liberation Sans", sans-serif; }
.t9 { font-size: 9px; }
.t11 { font-size: 11px; }
.t18 { font-size: 18px; }
.t20 { font-size: 20px; }
.cyan { fill: #0ff; font-family: "Liberation Sans", sans-serif; font-size: 9px; font-weight: 700; }
.cad .axisg { stroke: #0f0; stroke-width: 5; }
.cad .axisgh { fill: #0f0; }
.cad .axisr { stroke: #f00; stroke-width: 5; }
.cad .axisrh { fill: #f00; }
.cad .axisb { fill: #0000c0; }
.axisx { fill: #f00; font-family: "Liberation Sans", sans-serif; font-size: 15px; }

/* dialog */
.dialog {
  position: absolute;
  left: 130px;
  top: 97px;
  width: 1038px;
  height: 543px;
  display: flex;
  flex-direction: column;
  background: #eee;
  border: 1px solid #c5c9d2;
  border-top: 0;
}
.dtitle { height: 27px; flex: none; margin: 0 -1px; padding: 0 9px 0 9px; display: flex; align-items: center; justify-content: space-between; background: #2f80e2; color: #fff; }
.dbtns { display: flex; gap: 18px; }
.dbtn { width: 10px; height: 10px; display: block; }
.dbody { flex: 1; padding: 18px 11px 0 11px; display: flex; flex-direction: column; min-height: 0; }
.dmain { height: 453px; flex: none; display: flex; gap: 7px; }
.dleft { width: 788px; flex: none; }
.setrow { height: 25px; display: flex; align-items: center; }
.setlabel { margin-left: 6px; color: #222; width: 100px; flex: none; }
.rad { display: flex; align-items: center; color: #222; white-space: nowrap; }
.radio { display: block; position: relative; width: 14px; height: 14px; flex: none; border: 1px solid #9a9a9a; border-radius: 50%; background: #fff; margin-right: 7px; }
.radio.on::after { content: ""; position: absolute; left: 3px; top: 3px; width: 6px; height: 6px; border-radius: 50%; background: #4d9bf7; }
.r1 { width: 85px; }
.r2 { width: 62px; }
.vsep { width: 1px; height: 22px; background: #d4d6da; margin-right: 18px; flex: none; }
.btn { font: inherit; height: 26px; padding: 0; border: 1px solid #c3cad6; border-radius: 3px; background: #f6f7f8; color: #333; flex: none; }
.bset { width: 90px; height: 25px; }
.gridrow { display: flex; gap: 6px; height: 307px; margin-top: 13px; }
.gridwrap { position: relative; width: 550px; flex: none; overflow: hidden; border: 1px solid #c8ccd3; border-top-color: #bcc0c6; background: linear-gradient(#eee, #eee) 0 0 / 15px 291px no-repeat, #fff; }
.grid { border-collapse: collapse; table-layout: fixed; width: 630px; color: #222; }
.c0 { width: 15px; }
.c1 { width: 110px; }
.cn { width: 101px; }
.grid th, .grid td { border: 1px solid #c8ccd3; padding: 0; font-weight: 400; white-space: nowrap; overflow: hidden; }
.grid th { background: #eee; color: #444; text-align: center; }
.grid th.blank { background: #fff; border-top: 0; border-left: 0; }
.grid td { padding-left: 3px; height: 26px; line-height: 24px; }
.grid tr:first-child th { border-top: 0; }
.grid tr > :first-child { border-left: 0; }
.hr th { height: 14px; line-height: 14px; }
.r0 td { height: 31px; }
.grid td.corner { position: relative; padding: 0; background: #ececec; }
.diag { position: absolute; left: 0; top: 0; width: 100%; height: 100%; }
.ctop { position: absolute; right: 7px; top: 0; line-height: 18px; }
.cbot { position: absolute; left: 0; bottom: 0; line-height: 17px; }
.hthumb { position: absolute; left: 13px; bottom: 2px; width: 237px; height: 8px; border-radius: 4px; background: #ccc; }
.section { width: 232px; height: 307px; background: #000; flex: none; }
.secsvg { display: block; }
.w { stroke: #fff; stroke-width: 3; fill: none; }
.red { stroke: #f00; stroke-width: 5; fill: none; }
.lab text { fill: #fff; font-family: "DejaVu Sans", sans-serif; font-size: 30px; }
.lab .cjk36 { font-family: "Noto Sans CJK SC", sans-serif; font-size: 36px; }
.lab .cjk45 { font-family: "Noto Sans CJK SC", sans-serif; font-size: 45px; }
.wu { stroke: #fff; stroke-width: 5; }
.btnrow { display: flex; gap: 6px; margin-top: 5px; }
.b60 { width: 60px; }
.b65 { width: 65px; }
.bspace { width: 58px; flex: none; }
.dis { background: #e6e7e8; color: #a8a9ab; }
.legend { display: flex; align-items: center; height: 18px; margin-top: 7px; color: #222; }
.legend i { flex: 1; height: 1px; background: #c5c9d2; margin-left: 5px; margin-top: -2px; }
.genrow { display: flex; margin-top: 4px; height: 20px; margin-left: 1px; }
.g1 { width: 131px; }
.cover { height: 23px; margin-left: 1px; margin-top: 1px; }
.box { display: block; width: 14px; height: 14px; border: 1px solid #777; border-radius: 2px; background: #f8f8f8; margin-right: 7px; flex: none; }
.floors { position: relative; width: 219px; height: 444px; margin-top: 2px; background: #fff; border: 1px solid #c8ccd3; border-radius: 3px; flex: none; }
.flegend { position: absolute; left: 9px; top: -8px; padding: 0 2px; line-height: 14px; background: linear-gradient(#eee 50%, #fff 50%); color: #222; }
.flist { height: 418px; margin-top: 15px; overflow: hidden; }
.fr { display: flex; align-items: center; height: 24px; line-height: 24px; color: #222; white-space: nowrap; }
.fr .arrow { margin-right: 11px; flex: none; }
.l0 { padding-left: 15px; }
.l1 { padding-left: 35px; }
.l2 { padding-left: 72px; }
.ck { position: relative; display: block; width: 14px; height: 14px; margin-right: 10px; flex: none; background: #5aa5f8; border-radius: 2px; }
.ck::after { content: ""; position: absolute; left: 3px; top: 2.5px; width: 8px; height: 4px; border: solid #fff; border-width: 0 0 2px 2px; transform: rotate(-45deg); }
.vthumb { position: absolute; left: 198px; top: 26px; width: 8px; height: 190px; border-radius: 4px; background: #ccc; }
.dhr { height: 1px; flex: none; background: #c5c9d2; }
.dfoot { display: flex; justify-content: flex-end; gap: 6px; margin-top: 6px; }
.bok { width: 78px; background: #2f80e2; border-color: #2f80e2; color: #fff; }
.bcancel { width: 78px; }
.grip { position: absolute; right: 2px; bottom: 3px; width: 8px; height: 8px; }
```
